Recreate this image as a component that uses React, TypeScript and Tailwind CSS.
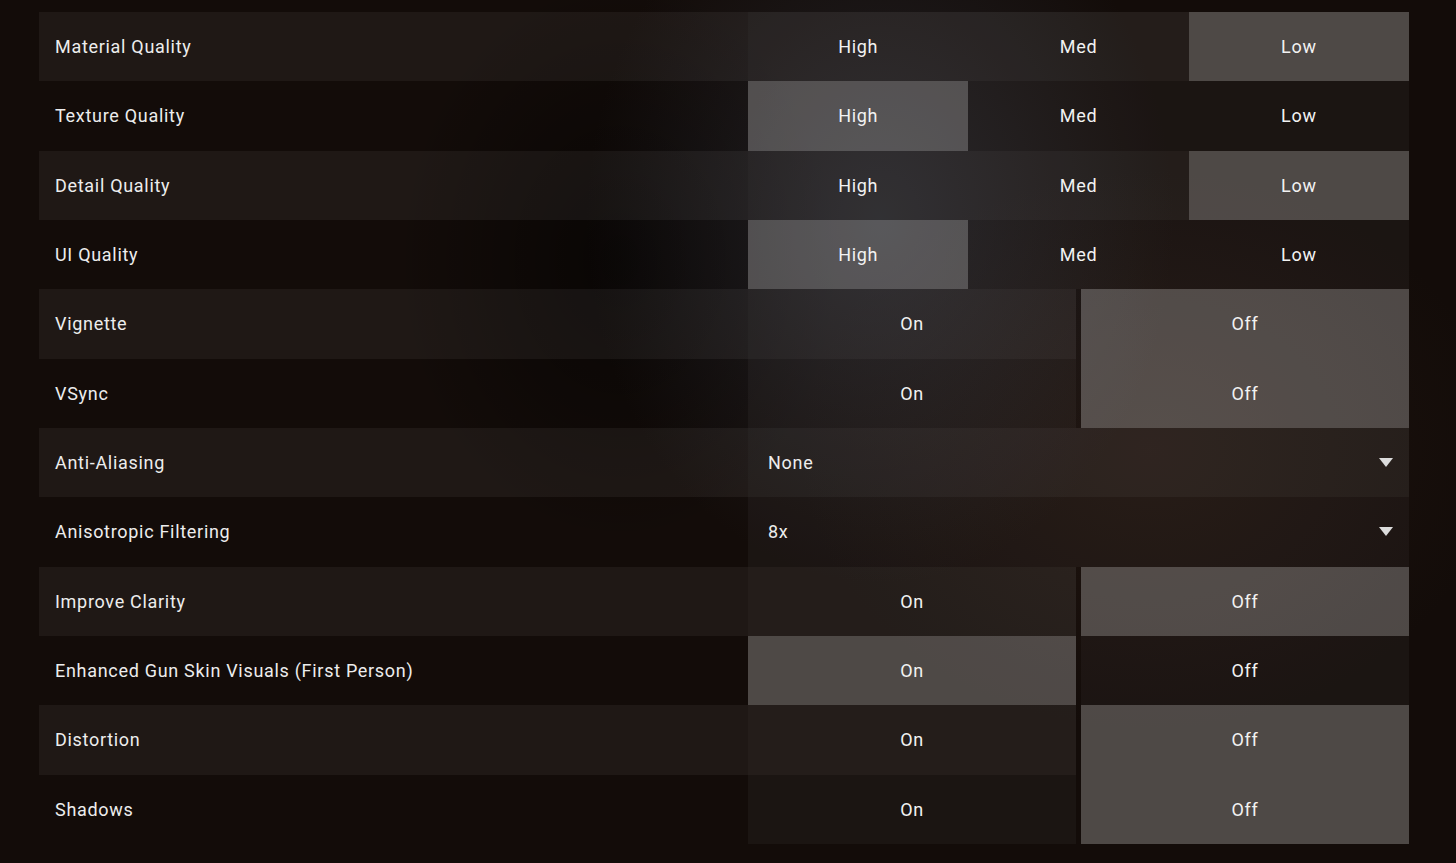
import React from "react";

type Row =
  | { label: string; kind: "seg"; options: string[]; selected: number }
  | { label: string; kind: "select"; value: string };

const QUALITY = ["High", "Med", "Low"];
const TOGGLE = ["On", "Off"];

const rows: Row[] = [
  { label: "Material Quality", kind: "seg", options: QUALITY, selected: 2 },
  { label: "Texture Quality", kind: "seg", options: QUALITY, selected: 0 },
  { label: "Detail Quality", kind: "seg", options: QUALITY, selected: 2 },
  { label: "UI Quality", kind: "seg", options: QUALITY, selected: 0 },
  { label: "Vignette", kind: "seg", options: TOGGLE, selected: 1 },
  { label: "VSync", kind: "seg", options: TOGGLE, selected: 1 },
  { label: "Anti-Aliasing", kind: "select", value: "None" },
  { label: "Anisotropic Filtering", kind: "select", value: "8x" },
  { label: "Improve Clarity", kind: "seg", options: TOGGLE, selected: 1 },
  { label: "Enhanced Gun Skin Visuals (First Person)", kind: "seg", options: TOGGLE, selected: 0 },
  { label: "Distortion", kind: "seg", options: TOGGLE, selected: 1 },
  { label: "Shadows", kind: "seg", options: TOGGLE, selected: 1 },
];

function Caret() {
  return (
    <svg width="14" height="9" viewBox="0 0 14 9" className="shrink-0">
      <polygon points="0,0 14,0 7,9" fill="#dcdcdc" />
    </svg>
  );
}

function SettingRow({ row, shaded }: { row: Row; shaded: boolean }) {
  const idle = shaded ? "bg-white/[0.07]" : "bg-white/[0.035]";
  return (
    <div className="flex h-[69.33px]">
      <div className={`flex w-[709px] items-center pl-4 ${shaded ? "bg-white/[0.05]" : ""}`}>
        <span className="text-[#ededed]">{row.label}</span>
      </div>

      {row.kind === "select" ? (
        <div className={`flex flex-1 items-center justify-between pl-5 pr-4 ${idle}`}>
          <span className="text-[#ededed]">{row.value}</span>
          <Caret />
        </div>
      ) : (
        <div className={`flex flex-1 ${row.options.length === 2 ? "gap-[5px]" : ""}`}>
          {row.options.map((opt, i) => (
            <div
              key={opt}
              className={`flex flex-1 items-center justify-center text-[#f2f2f2] ${
                i === row.selected ? "bg-white/[0.25]" : idle
              }`}
            >
              {opt}
            </div>
          ))}
        </div>
      )}
    </div>
  );
}

export default function App() {
  return (
    <div className="h-[863px] w-[1456px] overflow-hidden bg-[#130c09] bg-[radial-gradient(ellipse_420px_520px_at_880px_220px,rgba(52,58,70,0.45),transparent_70%),radial-gradient(ellipse_300px_380px_at_620px_260px,rgba(0,0,0,0.55),transparent_75%),radial-gradient(ellipse_500px_400px_at_1150px_450px,rgba(60,40,30,0.3),transparent_70%)] pt-3 pl-[39px] font-['Roboto',sans-serif] text-[18px] tracking-[0.7px]">
      <div className="flex w-[1370px] flex-col">
        {rows.map((row, i) => (
          <SettingRow key={row.label} row={row} shaded={i % 2 === 0} />
        ))}
      </div>
    </div>
  );
}
